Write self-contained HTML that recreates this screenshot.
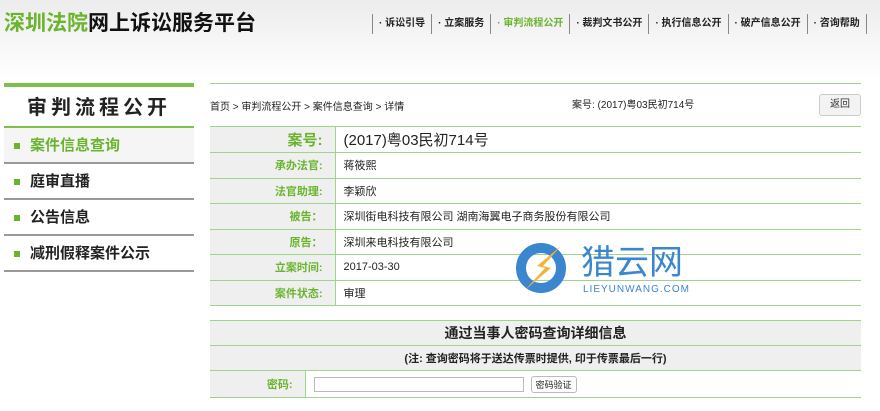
<!DOCTYPE html>
<html><head><meta charset="utf-8"><style>
*{margin:0;padding:0;box-sizing:border-box}
body{width:880px;height:411px;overflow:hidden;background:#fff;font-family:"Liberation Sans","Noto Sans CJK SC",sans-serif;position:relative;color:#222}
.hdr{position:absolute;left:0;top:0;width:880px;height:80px;background:linear-gradient(180deg,#ececec 0%,#f6f6f6 50%,#fff 100%)}
.logo{position:absolute;left:4px;top:7px;font-size:21px;font-weight:bold;color:#111}
.logo span{color:#6ab42e}
.nav{position:absolute;left:372px;top:14px;font-size:10px;font-weight:bold;display:flex}
.nav div{border-left:1px solid #888;height:20px;line-height:20px;padding:0 6px 0 6px}
.nav div:last-child{border-right:1px solid #888}
.nav .on{color:#6ab42e}
.side{position:absolute;left:4px;top:83px;width:190px}
.side .t{border-top:4px solid #7cc24a;border-bottom:2px solid #7cc24a;height:45px;text-align:center;font-size:20px;font-weight:bold;letter-spacing:4px;line-height:42px}
.side .m{height:36px;border-bottom:2px solid #999;font-size:15px;font-weight:bold;line-height:36px;padding-left:10px}
.side .m i{display:inline-block;width:6px;height:6px;background:#6ab42e;margin-right:10px;vertical-align:middle}
.side .m.on{background:#f5f5f5;color:#6ab42e}
.main{position:absolute;left:210px;top:83px;width:651px;border-top:1px solid #9fd58b}
.bc{height:42px;position:relative;font-size:10px}
.bc .a{position:absolute;left:0;top:14px}
.bc .b{position:absolute;left:362px;top:12px}
.bc .btn{position:absolute;right:0;top:10px;width:42px;height:22px;border:1px solid #ccc;border-radius:3px;background:#f3f3f3;font-size:10px;text-align:center;line-height:20px;color:#333}
table{border-collapse:collapse;width:651px}
td{border-top:1px solid #9fd58b;border-bottom:1px solid #9fd58b;height:25.5px;font-size:11px;padding:0}
td.l{width:125px;background:#efefef;color:#6ab42e;font-weight:bold;text-align:right;padding-right:12px;border-right:1px solid #9fd58b}
td.v{padding-left:8px}
.big td{height:26px}
.big td.l{font-size:15px}
.big td.v{font-size:15px}
.t2{position:absolute;left:210px;top:320px;width:651px}
.t2 td{background:#efefef}
.t2 td.v{background:#fff}
.wm{position:absolute;left:515px;top:234px}
</style></head><body>
<div class="hdr"></div>
<div class="logo"><span>深圳法院</span>网上诉讼服务平台</div>
<div class="nav"><div>· 诉讼引导</div><div>· 立案服务</div><div class="on">· 审判流程公开</div><div>· 裁判文书公开</div><div>· 执行信息公开</div><div>· 破产信息公开</div><div>· 咨询帮助</div></div>
<div class="side">
<div class="t">审判流程公开</div>
<div class="m on"><i></i>案件信息查询</div>
<div class="m"><i></i>庭审直播</div>
<div class="m"><i></i>公告信息</div>
<div class="m"><i></i>减刑假释案件公示</div>
</div>
<div class="main">
<div class="bc"><span class="a">首页 &gt; 审判流程公开 &gt; 案件信息查询 &gt; 详情</span><span class="b">案号: (2017)粤03民初714号</span><div class="btn">返回</div></div>
<table>
<tr class="big"><td class="l">案号:</td><td class="v">(2017)粤03民初714号</td></tr>
<tr><td class="l">承办法官:</td><td class="v">蒋筱熙</td></tr>
<tr><td class="l">法官助理:</td><td class="v">李颖欣</td></tr>
<tr><td class="l">被告：</td><td class="v">深圳街电科技有限公司 湖南海翼电子商务股份有限公司</td></tr>
<tr><td class="l">原告：</td><td class="v">深圳来电科技有限公司</td></tr>
<tr><td class="l">立案时间:</td><td class="v">2017-03-30</td></tr>
<tr><td class="l">案件状态:</td><td class="v">审理</td></tr>
</table>
</div>
<div class="t2"><table>
<tr><td colspan="2" style="text-align:center;font-size:14px;font-weight:bold;height:25px">通过当事人密码查询详细信息</td></tr>
<tr><td colspan="2" style="text-align:center;font-size:11px;font-weight:bold;height:25px">(注: 查询密码将于送达传票时提供, 印于传票最后一行)</td></tr>
<tr><td class="l" style="height:27px;width:95px">密码:</td><td class="v" style="padding-left:8px"><span style="display:inline-block;width:210px;height:15px;border:1px solid #bbb;vertical-align:middle"></span> <span style="display:inline-block;border:1px solid #bbb;border-radius:3px;font-size:9px;padding:1px 4px;vertical-align:middle;margin-left:4px">密码验证</span></td></tr>
</table></div>
<div class="wm"><svg width="190" height="65" viewBox="0 0 190 65">
<circle cx="26" cy="34" r="20" fill="none" stroke="#3a86cf" stroke-width="10"/>
<path d="M46 12 L22 32 L30 34 L10 56 L36 34 L28 32 Z" fill="#f3b23a"/>
<text x="66" y="40" font-size="34" fill="#3a86cf" font-family="Noto Sans CJK SC,sans-serif">猎云网</text>
<text x="68" y="58" font-size="10" fill="#3a86cf" font-family="Liberation Sans,sans-serif" letter-spacing="1">LIEYUNWANG.COM</text>
</svg></div>
</body></html>
